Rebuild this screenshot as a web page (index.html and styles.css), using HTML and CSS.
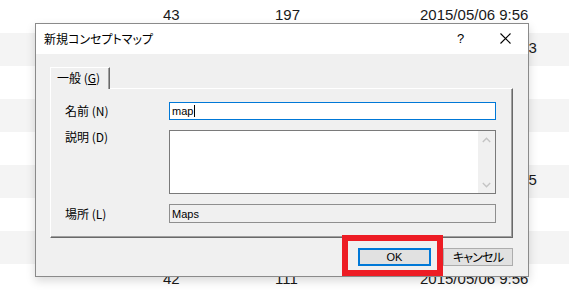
FILE: index.html
```html
<!DOCTYPE html>
<html lang="ja">
<head>
<meta charset="utf-8">
<title>新規コンセプトマップ</title>
<link rel="stylesheet" href="styles.css">
</head>
<body>
<div class="table">
  <div class="row"><span>43</span><span>197</span><span>2015/05/06 9:56</span></div>
  <div class="row alt"><span>38</span><span>152</span><span>2015/05/06 10:53</span></div>
  <div class="row"><span>41</span><span>160</span><span>2015/05/06 9:56</span></div>
  <div class="row alt"><span>40</span><span>148</span><span>2015/05/06 9:56</span></div>
  <div class="row"><span>39</span><span>133</span><span>2015/05/06 9:55</span></div>
  <div class="row alt"><span>44</span><span>171</span><span>2015/05/06 10:55</span></div>
  <div class="row"><span>45</span><span>120</span><span>2015/05/06 9:56</span></div>
  <div class="row alt"><span>46</span><span>119</span><span>2015/05/06 9:56</span></div>
  <div class="row"><span>42</span><span>111</span><span>2015/05/06 9:56</span></div>
</div>

<div class="dialog">
  <div class="titlebar">
    <span class="title">新規コンセプトマップ</span>
    <span class="tbtn help">?</span>
    <span class="tbtn close">
      <svg width="11" height="11" viewBox="0 0 11 11"><path d="M0.5 0.5 L10.5 10.5 M10.5 0.5 L0.5 10.5" stroke="#000" stroke-width="1.1" fill="none"/></svg>
    </span>
  </div>
  <div class="body">
    <div class="tabs"><div class="tab">一般 (<u>G</u>)</div></div>
    <div class="panel">
      <div class="form">
        <label class="lbl mid">名前 (N)</label>
        <div class="input focus"><span class="txt">map</span><span class="caret"></span></div>
        <label class="lbl top">説明 (D)</label>
        <div class="textarea">
          <div class="tacontent"></div>
          <div class="vscroll">
            <span class="arrow"><svg width="9" height="6" viewBox="0 0 9 6"><polyline points="0.8,5 4.5,1.3 8.2,5" fill="none" stroke="#c4c4c4" stroke-width="1.4"/></svg></span>
            <span class="arrow"><svg width="9" height="6" viewBox="0 0 9 6"><polyline points="0.8,1 4.5,4.7 8.2,1" fill="none" stroke="#c4c4c4" stroke-width="1.4"/></svg></span>
          </div>
        </div>
        <label class="lbl mid">場所 (L)</label>
        <div class="input readonly"><span class="txt">Maps</span></div>
      </div>
    </div>
    <div class="buttons">
      <button class="btn default">OK</button>
      <button class="btn jp">キャンセル</button>
    </div>
  </div>
</div>

<div class="highlight"></div>
</body>
</html>
```

FILE: styles.css
```css
html, body {
  margin: 0;
  padding: 0;
}
body {
  width: 569px;
  height: 297px;
  overflow: hidden;
  background: #ffffff;
  position: relative;
  font-family: "Noto Sans CJK JP", "Noto Sans", sans-serif;
}

/* background list */
.table {
  display: flex;
  flex-direction: column;
}
.row {
  display: grid;
  grid-template-columns: 163px 112px 145px auto;
  height: 33px;
  line-height: 30px;
  font-family: "Liberation Sans", Arial, sans-serif;
  font-size: 15px;
  color: #1a1a1a;
  white-space: nowrap;
  background: #ffffff;
}
.row span:first-child { grid-column: 2; }
.row.alt { background: #f4f4f4; }

/* dialog window */
.dialog {
  position: absolute;
  left: 35px;
  top: 23px;
  width: 494px;
  height: 254px;
  box-sizing: border-box;
  border: 1px solid #8a8a8a;
  background: #f0f0f0;
  box-shadow: 0 4px 9px rgba(0, 0, 0, 0.15);
  display: flex;
  flex-direction: column;
}
.titlebar {
  height: 30px;
  background: #ffffff;
  display: flex;
  align-items: center;
  padding-left: 8px;
}
.title {
  flex: 1;
  font-size: 12px;
  color: #000;
  font-feature-settings: "palt";
  padding-bottom: 1px;
}
.tbtn {
  width: 45px;
  height: 30px;
  display: flex;
  align-items: center;
  justify-content: center;
}
.help {
  font-family: "Liberation Sans", Arial, sans-serif;
  font-size: 13px;
  color: #000;
  padding-bottom: 2px;
  box-sizing: border-box;
}
.close svg { display: block; margin-top: -1px; }

.body {
  flex: 1;
  padding: 13px 15px 0 14px;
  display: flex;
  flex-direction: column;
}
.tabs {
  display: flex;
  height: 21px;
}
.tab {
  position: relative;
  z-index: 1;
  box-sizing: border-box;
  width: 60px;
  height: 22px;
  margin-bottom: -1px;
  background: #f0f0f0;
  border-top: 1px solid #ffffff;
  border-left: 1px solid #ffffff;
  border-right: 1px solid #696969;
  box-shadow: inset -1px 0 #a0a0a0;
  padding-left: 6px;
  font-size: 12px;
  line-height: 19px;
  color: #000;
  font-feature-settings: "palt";
}
.tab u { text-underline-offset: 1px; }

.panel {
  box-sizing: border-box;
  height: 150px;
  border-top: 1px solid #ffffff;
  border-left: 1px solid #ffffff;
  border-right: 1px solid #696969;
  border-bottom: 1px solid #696969;
  box-shadow: inset -1px -1px #a0a0a0;
  padding: 13px 16px 0 14px;
}
.form {
  display: grid;
  grid-template-columns: 104px 1fr;
  grid-template-rows: 18px 64px 19px;
  row-gap: 10px;
}
.lbl {
  font-size: 12px;
  color: #000;
  font-feature-settings: "palt";
  line-height: 14px;
}
.lbl.mid { align-self: center; }
.lbl.top { align-self: start; padding-top: 0px; }

.input {
  box-sizing: border-box;
  border: 1px solid #7a7a7a;
  background: #ffffff;
  display: flex;
  align-items: center;
  padding-left: 2px;
  font-family: "Liberation Sans", Arial, sans-serif;
  font-size: 11px;
  color: #000;
}
.input.focus { border-color: #0078d7; }
.input.readonly { background: #f0f0f0; border-color: #8f8f8f; }
.caret {
  display: inline-block;
  width: 0;
  height: 12px;
  border-left: 1px solid #000;
  margin-left: 1px;
}

.textarea {
  box-sizing: border-box;
  border: 1px solid #7a7a7a;
  background: #ffffff;
  display: flex;
}
.tacontent { flex: 1; }
.vscroll {
  width: 17px;
  background: #f0f0f0;
  display: flex;
  flex-direction: column;
  justify-content: space-between;
}
.arrow {
  height: 17px;
  display: flex;
  align-items: center;
  justify-content: center;
}
.arrow svg { display: block; }

.buttons {
  display: flex;
  justify-content: flex-end;
  gap: 12px;
  margin-top: 10px;
}
.btn {
  box-sizing: border-box;
  height: 18px;
  margin: 0;
  padding: 0;
  background: #e1e1e1;
  border: 1px solid #adadad;
  color: #000;
  font-family: "Liberation Sans", Arial, sans-serif;
  font-size: 11px;
  line-height: 14px;
}
.btn.default {
  width: 73px;
  border: 2px solid #0078d7;
}
.btn.jp {
  width: 70px;
  font-family: "Noto Sans CJK JP", sans-serif;
  font-size: 12px;
  font-feature-settings: "palt";
  letter-spacing: -0.8px;
}

/* annotation overlay */
.highlight {
  position: absolute;
  left: 342px;
  top: 235px;
  width: 101px;
  height: 41px;
  box-sizing: border-box;
  border: 6px solid #ed1c24;
}
```
